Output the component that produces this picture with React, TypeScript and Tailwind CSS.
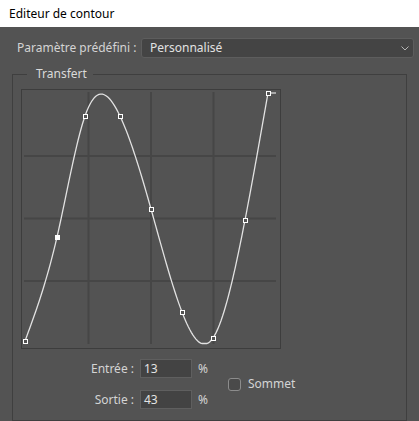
import React from 'react'

// control points of the curve, in local svg pixels (box inner origin = 22,90)
const points: [number, number][] = [
  [3, 251],
  [35, 147],
  [63, 26],
  [98, 26],
  [129, 119],
  [160, 222],
  [191, 248],
  [223, 130],
  [246, 3],
]

function splinePath(pts: [number, number][]) {
  const n = pts.length
  const xs = pts.map((p) => p[0])
  const ys = pts.map((p) => p[1])
  const h: number[] = []
  for (let i = 0; i < n - 1; i++) h.push(xs[i + 1] - xs[i])
  // natural cubic spline: solve for second derivatives
  const a: number[] = new Array(n).fill(0)
  const b: number[] = new Array(n).fill(1)
  const c: number[] = new Array(n).fill(0)
  const d: number[] = new Array(n).fill(0)
  for (let i = 1; i < n - 1; i++) {
    a[i] = h[i - 1]
    b[i] = 2 * (h[i - 1] + h[i])
    c[i] = h[i]
    d[i] = 6 * ((ys[i + 1] - ys[i]) / h[i] - (ys[i] - ys[i - 1]) / h[i - 1])
  }
  for (let i = 1; i < n; i++) {
    const m = a[i] / b[i - 1]
    b[i] -= m * c[i - 1]
    d[i] -= m * d[i - 1]
  }
  const M: number[] = new Array(n).fill(0)
  M[n - 1] = d[n - 1] / b[n - 1]
  for (let i = n - 2; i >= 0; i--) M[i] = (d[i] - c[i] * M[i + 1]) / b[i]

  const out: string[] = []
  for (let i = 0; i < n - 1; i++) {
    for (let t = 0; t <= 1; t += 0.05) {
      const x = xs[i] + t * h[i]
      const A = 1 - t
      const y =
        A * ys[i] +
        t * ys[i + 1] +
        ((A * A * A - A) * M[i] + (t * t * t - t) * M[i + 1]) * (h[i] * h[i]) / 6
      const cy = Math.min(253.5, Math.max(3, y))
      out.push(`${out.length ? 'L' : 'M'}${x.toFixed(2)} ${cy.toFixed(2)}`)
    }
  }
  out.push(`L${xs[n - 1]} 3`)
  return out.join(' ')
}

const curve = splinePath(points)
const gridX = [66.5, 129, 191.5]
const gridY = [66, 128.5, 191]

function Graph() {
  return (
    <div className="w-[260px] h-[260px] border border-[#3d3d3d] ml-[8px] mt-[7px]">
      <svg width="258" height="258" viewBox="0 0 258 258">
        {gridX.map((x) => (
          <line key={'x' + x} x1={x} y1={2} x2={x} y2={254} stroke="#464646" strokeWidth="2" />
        ))}
        {gridY.map((y) => (
          <line key={'y' + y} x1={2} y1={y} x2={254} y2={y} stroke="#464646" strokeWidth="2" />
        ))}
        <path d={curve} fill="none" stroke="#e2e2e2" strokeWidth="1.3" />
        <line x1={246} y1={3} x2={254} y2={3} stroke="#a8a8a8" strokeWidth="2" />
        {points.map(([x, y], i) => (
          <rect
            key={i}
            x={x - 1.5}
            y={y - 1.5}
            width={4}
            height={4}
            fill={i === 1 ? '#ffffff' : '#535353'}
            stroke="#ffffff"
            strokeWidth="1"
          />
        ))}
      </svg>
    </div>
  )
}

function NumberField({ label, value }: { label: string; value: string }) {
  return (
    <div className="flex items-center h-[19px]">
      <span className="w-[127px] pr-[6px] text-right">{label}</span>
      <div className="w-[52px] h-[19px] bg-[#434343] border border-[#5f5f5f] pl-[3px] flex items-center text-[#e4e4e4]">
        {value}
      </div>
      <span className="ml-[6px]">%</span>
    </div>
  )
}

export default function App() {
  return (
    <div
      className="w-[419px] h-[421px] bg-[#535353] flex flex-col text-[12px] text-[#d4d4d4] overflow-hidden"
      style={{ fontFamily: '"Noto Sans", "Open Sans", sans-serif' }}
    >
      <div className="h-[27px] bg-white text-black pl-[9px] flex items-center shrink-0">
        Editeur de contour
      </div>

      <div className="flex items-center mt-[11px] pl-[17px] pr-[5px] h-[20px]">
        <span className="w-[124px]">Paramètre prédéfini :</span>
        <div className="flex-1 h-[20px] bg-[#444444] border border-[#5d5d5d] rounded-[3px] flex items-center justify-between pl-[8px] pr-[4px] text-[#e2e2e2]">
          <span>Personnalisé</span>
          <svg width="8" height="5" viewBox="0 0 8 5">
            <polyline points="0.5,0.5 4,4 7.5,0.5" fill="none" stroke="#b5b5b5" strokeWidth="1" />
          </svg>
        </div>
      </div>

      <fieldset className="mx-[12px] mt-[8px] border border-[#3f3f3f] flex-1 min-h-0">
        <legend className="ml-[14px] pl-[9px] pr-[6px] leading-[16px] text-[#dadada]">Transfert</legend>
        <Graph />
        <div className="flex items-center mt-[10px]">
          <div className="flex flex-col gap-[12px]">
            <NumberField label="Entrée :" value="13" />
            <NumberField label="Sortie :" value="43" />
          </div>
          <label className="flex items-center ml-[20px] gap-[7px]">
            <span className="w-[13px] h-[13px] rounded-[3px] border border-[#8c8c8c] bg-[#4a4a4a]" />
            <span>Sommet</span>
          </label>
        </div>
      </fieldset>
    </div>
  )
}
